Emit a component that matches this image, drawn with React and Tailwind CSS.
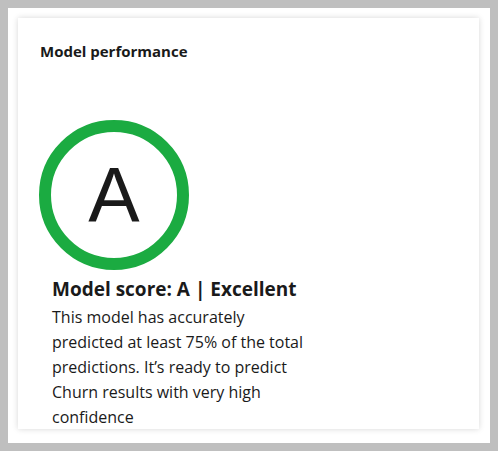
export default function App() {
  return (
    <div className="w-[498px] h-[451px] bg-[#bfbfbf] p-2" style={{ fontFamily: "'Open Sans', 'Noto Sans', sans-serif" }}>
      <div className="w-full h-full bg-white pt-[10px] pl-[10px] pr-[11px] pb-[14px]">
        <div className="w-full h-full bg-white shadow-[0_0_6px_rgba(0,0,0,0.16)] px-[22px] pt-[23px] overflow-hidden">
          <h2 className="text-[15px] leading-[20px] font-bold text-[#1a1a1a]">Model performance</h2>
          <div className="mt-[59px] -ml-[1px] w-[150px] h-[150px] rounded-full border-[12px] border-[#1bab41] flex items-center justify-center">
            <span className="text-[77px] leading-none text-[#1a1a1a] font-normal" style={{ fontFamily: "'Liberation Sans', Arial, sans-serif" }}>A</span>
          </div>
          <div className="pl-[12px] mt-[6px]">
            <h3 className="text-[19px] leading-[26px] font-bold text-[#1a1a1a]">Model score: A | Excellent</h3>
            <p className="text-[16px] leading-[25px] text-[#1a1a1a] w-[264px] mt-[3px]">
              This model has accurately predicted at least 75% of the total predictions. It’s ready to predict Churn results with very high confidence
            </p>
          </div>
        </div>
      </div>
    </div>
  );
}
